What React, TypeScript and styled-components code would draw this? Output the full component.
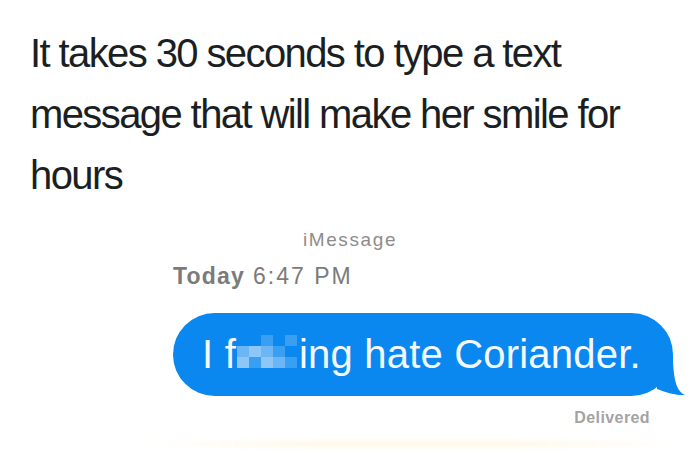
import React from "react";
import styled, { createGlobalStyle } from "styled-components";

const Global = createGlobalStyle`
  html, body { margin: 0; padding: 0; background: #ffffff; }
  body { width: 700px; height: 453px; overflow: hidden; }
`;

const Page = styled.div`
  width: 700px;
  height: 453px;
  display: flex;
  flex-direction: column;
  background: #ffffff;
`;

const Title = styled.h1`
  margin: 0;
  padding: 23px 0 0 30px;
  font-family: "Liberation Sans", Arial, sans-serif;
  font-weight: 400;
  font-size: 40px;
  line-height: 61px;
  letter-spacing: -1.6px;
  color: #1b1f23;
`;

const Chat = styled.section`
  display: flex;
  flex-direction: column;
  font-family: "Liberation Sans", Arial, sans-serif;
  flex: 1;
`;

const Service = styled.div`
  align-self: center;
  margin-top: 23px;
  font-size: 19px;
  line-height: 22px;
  letter-spacing: 1.6px;
  color: #8c8c8c;
`;

const Stamp = styled.div`
  margin: 11px 0 0 173px;
  font-size: 23px;
  line-height: 28px;
  letter-spacing: 2px;
  color: #7b7b7b;
  b { font-weight: 700; margin-right: 8px; letter-spacing: 1.2px; }
`;

const Bubble = styled.div`
  position: relative;
  margin: 23px 0 0 173px;
  width: 500px;
  height: 83px;
  box-sizing: border-box;
  padding-left: 29px;
  border-radius: 42px;
  background: #0b88f0;
  color: #f4f9ff;
  font-size: 40px;
  line-height: 83px;
  letter-spacing: 0.2px;
  white-space: nowrap;
`;

const Tail = styled.svg`
  position: absolute;
  right: -14px;
  bottom: 0;
  overflow: visible;
`;

const Mosaic = styled.span`
  display: inline-grid;
  grid-template-columns: repeat(5, 12px);
  grid-template-rows: repeat(3, 11px);
  vertical-align: top;
  margin: 22px 2px 0 1px;
`;

const Tile = styled.span<{ $c: string }>`
  background: ${(p) => p.$c};
`;

const Status = styled.div`
  align-self: flex-end;
  margin: 12px 50px 0 0;
  font-size: 16px;
  line-height: 19px;
  font-weight: 700;
  letter-spacing: 0.4px;
  color: #a3a3a3;
`;

const Haze = styled.div`
  margin: 14px 10px 0 140px;
  height: 6px;
  border-radius: 3px;
  background: linear-gradient(to right, rgba(255, 244, 214, 0), rgba(255, 246, 222, 0.7) 30%, rgba(255, 246, 222, 0.7) 70%, rgba(255, 244, 214, 0));
  filter: blur(2px);
`;

const B = "#0b88f0";
const M = "#3a9ff3";
const L = "#6cb6f6";
const X = "#8ec7f7";

const tiles = [
  B, B, M, B, M,
  L, X, L, M, B,
  X, M, X, L, M,
];

export default function App() {
  return (
    <Page>
      <Global />
      <Title>
        It takes 30 seconds to type a text
        <br />
        message that will make her smile for
        <br />
        hours
      </Title>
      <Chat>
        <Service>iMessage</Service>
        <Stamp>
          <b>Today</b>6:47 PM
        </Stamp>
        <Bubble>
          I f
          <Mosaic aria-hidden>
            {tiles.map((c, i) => (
              <Tile key={i} $c={c} />
            ))}
          </Mosaic>
          ing hate Coriander.
          <Tail width="30" height="44" viewBox="0 0 30 44">
            <path d="M16 4 C16 28 20 40 28 43 C20 43.5 10 41 0 37 L0 4 Z" fill="#0b88f0" />
          </Tail>
        </Bubble>
        <Status>Delivered</Status>
        <Haze />
      </Chat>
    </Page>
  );
}
